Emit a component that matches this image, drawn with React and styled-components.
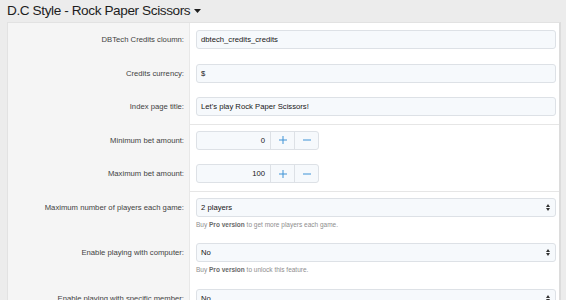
import React from 'react';
import styled, { createGlobalStyle } from 'styled-components';

const GlobalStyle = createGlobalStyle`
  html, body {
    margin: 0;
    padding: 0;
    background-color: #ececec;
    font-family: 'Liberation Sans', Arial, sans-serif;
    overflow: hidden;
  }
`;

const Page = styled.div`
  padding: 0 5px 0 7px;
  height: 300px;
  overflow: hidden;
`;

const Title = styled.h1`
  display: flex;
  align-items: center;
  gap: 4px;
  margin: 0;
  height: 21px;
  padding-bottom: 1px;
  font-size: 13.6px;
  letter-spacing: -0.4px;
  font-weight: 400;
  color: #1d1d1d;
`;

const Panel = styled.div`
  background-color: #ffffff;
  border: 1px solid #e2e2e2;
  border-right: 2px solid #dcdcdc;
  border-bottom: none;
`;

const Row = styled.div`
  display: grid;
  grid-template-columns: 182px 1fr;
`;

const Label = styled.div`
  background-color: #f5f5f5;
  border-right: 1px solid #e8e8e8;
  text-align: right;
  padding: 7px 5px 0 0;
  font-size: 7.7px;
  line-height: 19px;
  color: #424242;
`;

const Control = styled.div`
  padding: ${(props) => (props.$separated ? '6px' : '7px')} 3px 7.5px 6px;
  border-top: ${(props) => (props.$separated ? '1px solid #e6e6e6' : 'none')};
`;

const TextBox = styled.div`
  box-sizing: border-box;
  height: 19px;
  display: flex;
  align-items: center;
  justify-content: space-between;
  padding: 0 5px 0 4px;
  border: 1px solid #dde1e6;
  border-radius: 3px;
  background-color: #f6f9fc;
  font-size: 7.7px;
  color: #161616;
`;

const NumberGroup = styled.div`
  display: flex;
  width: 123px;
  height: 19px;
  box-sizing: border-box;
  border: 1px solid #dde1e6;
  border-radius: 3px;
  background-color: #f6f9fc;
  overflow: hidden;
`;

const NumberValue = styled.div`
  flex: 1;
  text-align: right;
  padding-right: 5px;
  font-size: 7.7px;
  line-height: 17px;
  color: #161616;
`;

const StepButton = styled.div`
  width: 23px;
  border-left: 1px solid #dde1e6;
  display: flex;
  align-items: center;
  justify-content: center;
`;

const Hint = styled.div`
  margin-top: 3px;
  font-size: 6.5px;
  line-height: 9px;
  color: #8e8e8e;

  strong {
    color: #6a6a6a;
    font-weight: 700;
  }
`;

const Caret = () => (
  <svg width="7" height="4" viewBox="0 0 7 4">
    <path d="M0 0 L7 0 L3.5 4 Z" fill="#1d1d1d" />
  </svg>
);

const SelectArrows = () => (
  <svg width="4" height="7" viewBox="0 0 4 7">
    <path d="M0 3 L4 3 L2 0 Z M0 4 L4 4 L2 7 Z" fill="#333" />
  </svg>
);

const PlusIcon = () => (
  <svg width="8" height="8" viewBox="0 0 8 8">
    <path d="M4 0 V8 M0 4 H8" stroke="#3f93d6" strokeWidth="1" />
  </svg>
);

const MinusIcon = () => (
  <svg width="8" height="8" viewBox="0 0 8 8">
    <path d="M0 4 H8" stroke="#3f93d6" strokeWidth="1" />
  </svg>
);

const TextRow = ({ label, value, separated }) => (
  <Row>
    <Label>{label}</Label>
    <Control $separated={separated}>
      <TextBox>{value}</TextBox>
    </Control>
  </Row>
);

const NumberRow = ({ label, value, separated }) => (
  <Row>
    <Label>{label}</Label>
    <Control $separated={separated}>
      <NumberGroup>
        <NumberValue>{value}</NumberValue>
        <StepButton>
          <PlusIcon />
        </StepButton>
        <StepButton>
          <MinusIcon />
        </StepButton>
      </NumberGroup>
    </Control>
  </Row>
);

const SelectRow = ({ label, value, hint, separated }) => (
  <Row>
    <Label>{label}</Label>
    <Control $separated={separated}>
      <TextBox>
        <span>{value}</span>
        <SelectArrows />
      </TextBox>
      {hint && (
        <Hint>
          Buy <strong>Pro version</strong> {hint}
        </Hint>
      )}
    </Control>
  </Row>
);

const App = () => {
  return (
    <Page>
      <GlobalStyle />
      <Title>
        D.C Style - Rock Paper Scissors <Caret />
      </Title>
      <Panel>
        <TextRow label="DBTech Credits cloumn:" value="dbtech_credits_credits" />
        <TextRow label="Credits currency:" value="$" />
        <TextRow label="Index page title:" value="Let's play Rock Paper Scissors!" />
        <NumberRow label="Minimum bet amount:" value="0" separated />
        <NumberRow label="Maximum bet amount:" value="100" />
        <SelectRow
          label="Maximum number of players each game:"
          value="2 players"
          hint="to get more players each game."
          separated
        />
        <SelectRow
          label="Enable playing with computer:"
          value="No"
          hint="to unlock this feature."
        />
        <SelectRow label="Enable playing with specific member:" value="No" />
      </Panel>
    </Page>
  );
};

export default App;
